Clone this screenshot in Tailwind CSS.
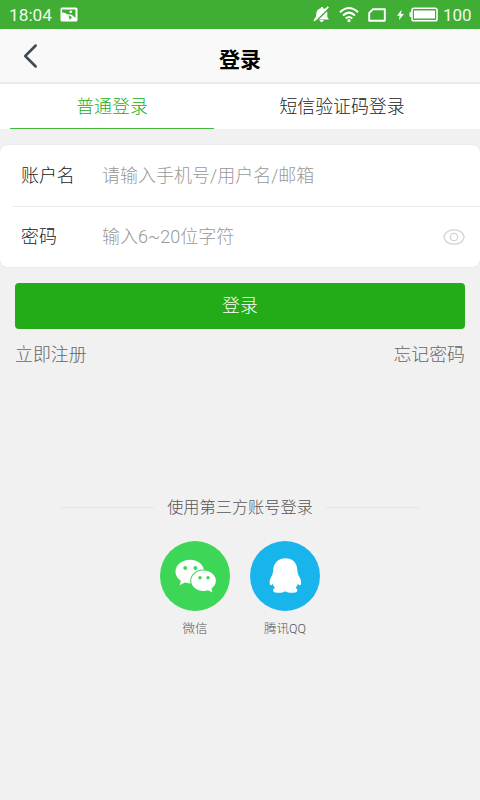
<!DOCTYPE html>
<html lang="zh-CN">
<head>
<meta charset="utf-8">
<title>登录</title>
<script src="https://cdn.jsdelivr.net/npm/@tailwindcss/browser@4"></script>
</head>
<body class="flex h-[800px] w-[480px] flex-col overflow-hidden bg-[#f1f1f1] font-[Roboto,'Noto_Sans_CJK_SC',sans-serif] text-[17.9px] leading-6 font-light text-[#222]">
  <div class="flex h-[29px] shrink-0 items-center bg-[#40ae34] pr-2 pl-[9px] text-[17.3px] font-normal text-white/95">
    <span class="w-[43px]">18:04</span>
    <svg class="ml-2 h-[15px] w-[18px]" viewBox="0 0 18 15"><rect x=".5" y=".5" width="17" height="14" rx="1.5" fill="#fff"/><path d="M2 2.500h13.500v8.500c-2-1.500-3-3.500-5.500-3.500C7 7.500 5 7 2 5.500z" fill="#40ae34"/><path d="M2 5.200c3 .6 5 1.500 7 2.800l-1 5.500C7 10 4.500 7.500 2 5.200z" fill="#fff"/><path d="M8.500 8.200c1.500.8 3 1.200 3.500 2L9.800 13z" fill="#40ae34"/><circle cx="10.800" cy="4.800" r="1.300" fill="#fff"/></svg>
    <svg class="ml-auto h-[17px] w-[17px]" viewBox="0 0 17 17"><path d="M9 1C8.200 1 7.700 1.500 7.700 2.200 4.800 3 3.500 5 3.300 7.500L3 10.500 1 13.500h15L14.300 11V7c0-2.200-1.300-4.200-4-4.800C10.300 1.500 9.800 1 9 1zM6.600 14h4.200c-.2 1.200-1 1.900-2.100 1.900S6.800 15.200 6.600 14z" fill="#fff"/><path d="M2.200 15.900L17 1.300" stroke="#40ae34" stroke-width="1.600"/><path d="M1 14.900L15.300.8" stroke="#fff" stroke-width="1.800"/></svg>
    <svg class="ml-[9px] h-[17px] w-[20px]" viewBox="0 0 20 17" fill="none" stroke="#fff" stroke-width="2"><path d="M1 6.200Q10-2.200 19 6.200M4 9.500Q10 3.700 16 9.500M6.700 12.500Q10 9.500 13.300 12.500"/><circle cx="10" cy="14.700" r="1.600" fill="#fff" stroke="none"/></svg>
    <svg class="ml-[9px] h-[14px] w-[18px]" viewBox="0 0 18 14"><path d="M5 1.200h11.800v11.600H1.200V5z" fill="none" stroke="#fff" stroke-width="1.900" stroke-linejoin="round"/></svg>
    <svg class="ml-[10px] h-[12px] w-[9px]" viewBox="0 0 9 14"><path d="M5.700.8L.5 7.800h3L2.700 13.200 8.500 5.800H5.200z" fill="#fff"/></svg>
    <svg class="ml-[4px] h-[15px] w-[29px]" viewBox="0 0 29 15"><path d="M3 5H1.500Q.5 5 .5 6v3q0 1 1 1H3z" fill="#fff"/><rect x="3" y="1.300" width="25" height="12.400" rx="1.800" fill="none" stroke="#fff" stroke-width="1.600"/><rect x="5" y="3.500" width="21" height="8" fill="#fff"/></svg>
    <span class="ml-[5px] w-[29px] text-[17px]">100</span>
  </div>

  <header class="grid h-[55px] shrink-0 grid-cols-[60px_1fr_60px] items-center border-b-2 border-[#ebebeb] bg-[#f9f9f9]">
    <svg class="ml-[23px] h-[26px] w-[16px]" viewBox="0 0 16 26"><path d="M12.700 2.500L2.200 13l10.500 10.500" fill="none" stroke="#414857" stroke-width="2.500" stroke-linecap="round" stroke-linejoin="round"/></svg>
    <h1 class="pt-[9px] text-center text-[21px] leading-7 font-bold text-black">登录</h1>
  </header>

  <nav class="flex h-[45px] shrink-0 bg-white px-[10px] text-center">
    <div class="w-[204px] border-b border-[#45b73c] pt-[11px] text-[#24ac18]">普通登录</div>
    <div class="flex-1 pt-[11px] pr-[2px] pl-[2px]">短信验证码登录</div>
  </nav>

  <main class="flex flex-col pt-4">
    <section class="rounded-lg bg-white ring-1 ring-[#ebebeb]">
      <div class="ml-3 flex h-[62px] items-center border-b border-[#ededed] pl-[9px]">
        <span class="w-[81px]">账户名</span><span class="text-[18px] text-[#999]">请输入手机号/用户名/邮箱</span>
      </div>
      <div class="flex h-[60px] items-center pr-[15px] pl-[21px]">
        <span class="w-[81px]">密码</span><span class="text-[18px] text-[#999]">输入6~20位字符</span>
        <svg class="ml-auto h-[16px] w-[22px]" viewBox="0 0 22 16" fill="none" stroke="#d2d2d2" stroke-width="1.200"><path d="M.8 8C2 3.500 6 .8 11 .8S20 3.500 21.200 8C20 12.500 16 15.200 11 15.200S2 12.500.8 8z"/><circle cx="11" cy="8" r="3.700"/></svg>
      </div>
    </section>
    <button class="mx-[15px] mt-4 h-[46px] rounded bg-[#24ac18] text-white">登录</button>
    <div class="mt-[14px] flex justify-between px-[15px] text-[#666]"><a>立即注册</a><a>忘记密码</a></div>
  </main>

  <footer class="mt-[129px] text-[#555]">
    <div class="mx-[60px] flex items-center justify-between text-[16.200px]"><i class="mb-px h-px w-[94px] bg-[#e6e6e6]"></i><span>使用第三方账号登录</span><i class="mb-px h-px w-[94px] bg-[#e6e6e6]"></i></div>
    <div class="mt-[21px] flex justify-center gap-5 text-center text-[12.500px] leading-5">
      <div class="w-[70px]">
        <svg class="h-[70px] w-[70px]" viewBox="0 0 70 70"><circle cx="35" cy="35" r="35" fill="#3dd656"/><path d="M30 18.800c-8 0-14.500 5.200-14.500 11.900 0 3.700 2 6.900 5.400 9.100l-1.300 4.500 5.200-2.700c1.600.5 3.400.8 5.200.8 8 0 14.200-5.200 14.200-11.700S38 18.800 30 18.800z" fill="#fff"/><ellipse cx="43.500" cy="40" rx="13.300" ry="11.500" fill="#3dd656"/><path d="M43.600 29.600c-6.900 0-12.400 4.500-12.400 10.200S36.700 50 43.600 50c1.600 0 3.100-.2 4.500-.7l4.400 2.200-1.100-3.900c2.700-1.900 4.500-4.600 4.500-7.800 0-5.700-5.500-10.200-12.300-10.200z" fill="#fff"/><g fill="#3dd656"><circle cx="25.200" cy="27" r="1.900"/><circle cx="35.400" cy="27" r="1.900"/><circle cx="40" cy="36.800" r="1.700"/><circle cx="48" cy="36.800" r="1.700"/></g></svg>
        <div class="mt-[8px]">微信</div>
      </div>
      <div class="w-[70px]">
        <svg class="h-[70px] w-[70px]" viewBox="0 0 70 70"><circle cx="35" cy="35" r="35" fill="#18b4ec"/><path d="M35.500 17.200c-7.700 0-12.300 5.300-12.300 12.500 0 1.600-.8 2.300-.8 4-1.800 2.800-3.300 6-2.700 9.100.2 1.700 1 1.900 3 .2.500 1.500 1.300 2.800 2.200 4-2.500.9-2.400 4 .4 4.500 3.500.7 7.500.4 9.900-1.300 2.500 1.700 6.500 2 10 1.300 2.800-.5 3-3.600.4-4.500 1-1.200 1.800-2.500 2.300-4 2.100 1.700 3 1.500 3.200-.2.500-3.100-1-6.300-2.900-9.100 0-1.700-.8-2.400-.8-4 0-7.200-4.200-12.500-11.900-12.500z" fill="#fff"/></svg>
        <div class="mt-[8px]">腾讯QQ</div>
      </div>
    </div>
  </footer>
</body>
</html>
